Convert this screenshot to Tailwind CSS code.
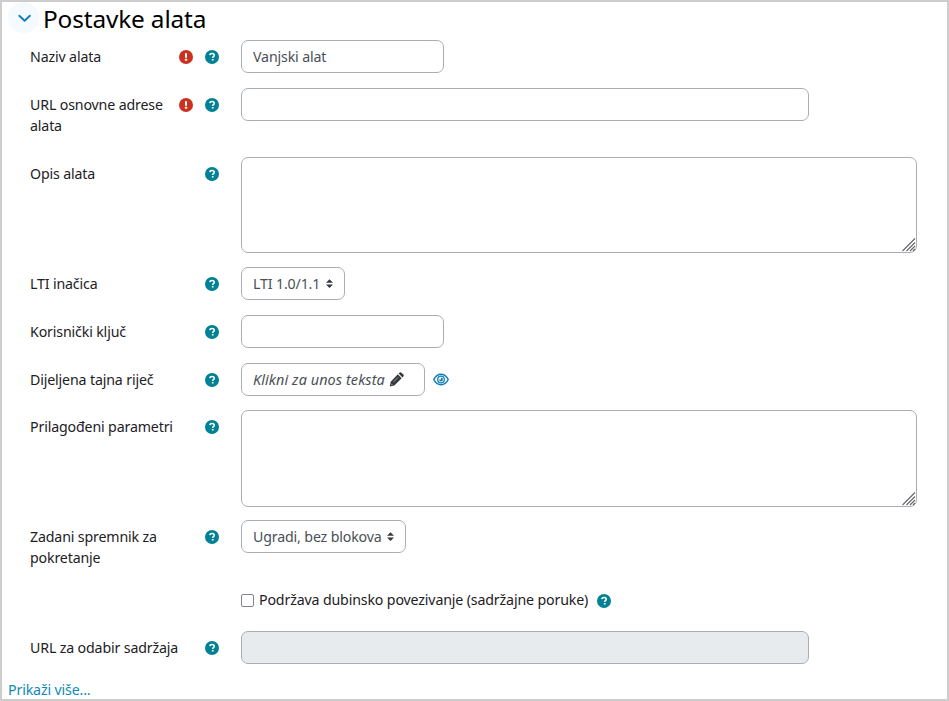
<!DOCTYPE html>
<html lang="hr">
<head>
  <meta charset="UTF-8">
  <meta name="viewport" content="width=device-width, initial-scale=1.0">
  <title>Postavke alata</title>
  <script src="https://cdn.jsdelivr.net/npm/@tailwindcss/browser@4"></script>
</head>
<body class="bg-white">
  <!-- shared icons -->
  <svg class="hidden">
    <symbol id="help" viewBox="0 0 512 512">
      <circle cx="256" cy="256" r="256" fill="#008196"/>
      <path d="M178 190c4-42 36-64 80-64 46 0 80 24 80 64 0 54-56 56-56 92v10" fill="none" stroke="#fff" stroke-width="58"/>
      <rect x="250" y="326" width="66" height="62" rx="12" fill="#fff"/>
    </symbol>
    <symbol id="required" viewBox="0 0 512 512">
      <circle cx="256" cy="256" r="256" fill="#ca3120"/>
      <path d="M216 116h80l-10 178h-60z" fill="#fff"/>
      <rect x="218" y="324" width="76" height="70" rx="12" fill="#fff"/>
    </symbol>
    <symbol id="sort" viewBox="0 0 4 5">
      <path d="M2 0L0 2h4zm0 5L0 3h4z" fill="#343a40"/>
    </symbol>
  </svg>

  <main class="flex h-[701px] w-[949px] flex-col overflow-hidden border-2 border-[#cdcdcd] font-['Noto_Sans',sans-serif] text-[14.2px] leading-[21px] tracking-[-0.15px] text-[#1d2125]">
    <header class="flex h-[38px] shrink-0 items-start pl-1.5">
      <button class="flex size-[31px] items-center justify-center rounded-full bg-[#f4fafd]">
        <svg class="size-[14px]" viewBox="0 0 14 14" fill="none" stroke="#0f7fb5" stroke-width="1.9" stroke-linecap="round" stroke-linejoin="round"><path d="M2.3 4.8L7.6 9.8l5.3-5"/></svg>
      </button>
      <h1 class="ml-1 text-[24.4px] leading-[33px] text-black">Postavke alata</h1>
    </header>

    <form class="flex flex-col pl-7">
      <div class="flex h-12">
        <div class="flex w-[211px] items-start pt-[6px] pr-[22px]">
          <label class="w-[140px]">Naziv alata</label>
          <svg class="mt-1 ml-auto size-[14px]"><use href="#required"/></svg>
          <svg class="mt-1 ml-3 size-[14px]"><use href="#help"/></svg>
        </div>
        <input type="text" value="Vanjski alat" class="h-[33px] w-[203px] rounded-[7px] border border-[#a9aeb6] px-[11px] pb-px text-[#495057]">
      </div>

      <div class="flex h-[69px]">
        <div class="flex w-[211px] items-start pt-[6px] pr-[22px]">
          <label class="w-[140px]">URL osnovne adrese alata</label>
          <svg class="mt-1 ml-auto size-[14px]"><use href="#required"/></svg>
          <svg class="mt-1 ml-3 size-[14px]"><use href="#help"/></svg>
        </div>
        <input type="text" class="h-[33px] w-[568px] rounded-[7px] border border-[#a9aeb6] px-[11px]">
      </div>

      <div class="flex h-[110px]">
        <div class="flex w-[211px] items-start pt-[6px] pr-[22px]">
          <label>Opis alata</label>
          <svg class="mt-1 ml-auto size-[14px]"><use href="#help"/></svg>
        </div>
        <div class="relative h-24 w-[676px] rounded-[7px] border border-[#a9aeb6]">
          <svg class="absolute right-0 bottom-0 size-[14px]" viewBox="0 0 14 14" fill="none" stroke="#666" stroke-width="1.1"><path d="M.5 13L13 .5M4.5 13L13 4.5M8 13l5-5M11 13l2-2"/></svg>
        </div>
      </div>

      <div class="flex h-12">
        <div class="flex w-[211px] items-start pt-[6px] pr-[22px]">
          <label>LTI inačica</label>
          <svg class="mt-1 ml-auto size-[14px]"><use href="#help"/></svg>
        </div>
        <div class="flex h-[33px] w-[104px] items-center justify-between rounded-[7px] border border-[#a9aeb6] pr-[11px] pl-[11px] text-[#495057]">
          <span class="whitespace-nowrap">LTI 1.0/1.1</span>
          <svg class="h-[9px] w-[7px]"><use href="#sort"/></svg>
        </div>
      </div>

      <div class="flex h-12">
        <div class="flex w-[211px] items-start pt-[6px] pr-[22px]">
          <label>Korisnički ključ</label>
          <svg class="mt-1 ml-auto size-[14px]"><use href="#help"/></svg>
        </div>
        <input type="text" class="h-[33px] w-[203px] rounded-[7px] border border-[#a9aeb6] px-[11px]">
      </div>

      <div class="flex h-12">
        <div class="flex w-[211px] items-start pt-[6px] pr-[22px]">
          <label>Dijeljena tajna riječ</label>
          <svg class="mt-1 ml-auto size-[14px]"><use href="#help"/></svg>
        </div>
        <div class="flex h-[33px] w-[184px] items-center rounded-[7px] border border-[#a9aeb6] pb-px pl-[11px] text-[#495057]">
          <em class="text-[14.4px] tracking-[0.1px] whitespace-nowrap">Klikni za unos teksta</em>
          <svg class="ml-1 size-[15px]" viewBox="0 0 15 15" fill="#343a40"><path d="M8.8 2.3l3.9 3.9-7.4 7.4-4.6 1 1-4.8zM9.6 1.5l.8-.8q1-1 2.1 0l1.8 1.8q1 1 0 2.1l-.8.8z"/><path d="M4.4 10l4.6-4.6" stroke="#fff" stroke-width=".5"/><path d="M2.2 11.8l1 1" stroke="#fff" stroke-width=".8"/></svg>
        </div>
        <svg class="mt-[10px] ml-2 h-[13px] w-4" viewBox="0 0 16 13" fill="none" stroke="#0f7fb5" stroke-width="1.5"><path d="M.8 6.5C4.2-.5 11.8-.5 15.2 6.5 11.8 13.5 4.2 13.5.8 6.5z"/><circle cx="8" cy="6.5" r="3.3" stroke-width="1.3"/><path d="M8 4.6a1.9 1.9 0 1 1-1.9 1.9h1.9z" fill="#0f7fb5" stroke="none"/></svg>
      </div>

      <div class="flex h-[109px]">
        <div class="flex w-[211px] items-start pt-[5px] pr-[22px]">
          <label>Prilagođeni parametri</label>
          <svg class="mt-1 ml-auto size-[14px]"><use href="#help"/></svg>
        </div>
        <div class="relative -mt-px h-[97px] w-[676px] rounded-[7px] border border-[#a9aeb6]">
          <svg class="absolute right-0 bottom-0 size-[14px]" viewBox="0 0 14 14" fill="none" stroke="#666" stroke-width="1.1"><path d="M.5 13L13 .5M4.5 13L13 4.5M8 13l5-5M11 13l2-2"/></svg>
        </div>
      </div>

      <div class="flex h-[69px]">
        <div class="flex w-[211px] items-start pt-[6px] pr-[22px]">
          <label class="w-[140px]">Zadani spremnik za pokretanje</label>
          <svg class="mt-1 ml-auto size-[14px]"><use href="#help"/></svg>
        </div>
        <div class="flex h-[33px] w-[165px] items-center justify-between rounded-[7px] border border-[#a9aeb6] pr-[11px] pl-[11px] text-[#495057]">
          <span class="whitespace-nowrap">Ugradi, bez blokova</span>
          <svg class="h-[9px] w-[7px]"><use href="#sort"/></svg>
        </div>
      </div>

      <div class="flex h-[42px] items-start pl-[211px]">
        <input type="checkbox" id="deep" class="mt-[5px] size-[13px] appearance-none rounded-[2px] border border-[#83839a] bg-white">
        <label for="deep" class="ml-[5px] whitespace-nowrap">Podržava dubinsko povezivanje (sadržajne poruke)</label>
        <svg class="mt-[5px] ml-[9px] size-[14px]"><use href="#help"/></svg>
      </div>

      <div class="flex h-12">
        <div class="flex w-[211px] items-start pt-[6px] pr-[22px]">
          <label>URL za odabir sadržaja</label>
          <svg class="mt-1 ml-auto size-[14px]"><use href="#help"/></svg>
        </div>
        <input type="text" disabled class="h-[33px] w-[568px] rounded-[7px] border border-[#a9aeb6] bg-[#e8ebee]">
      </div>
    </form>

    <a href="#" class="ml-1.5 self-start text-[#0f8ab8]">Prikaži više...</a>
  </main>
</body>
</html>
